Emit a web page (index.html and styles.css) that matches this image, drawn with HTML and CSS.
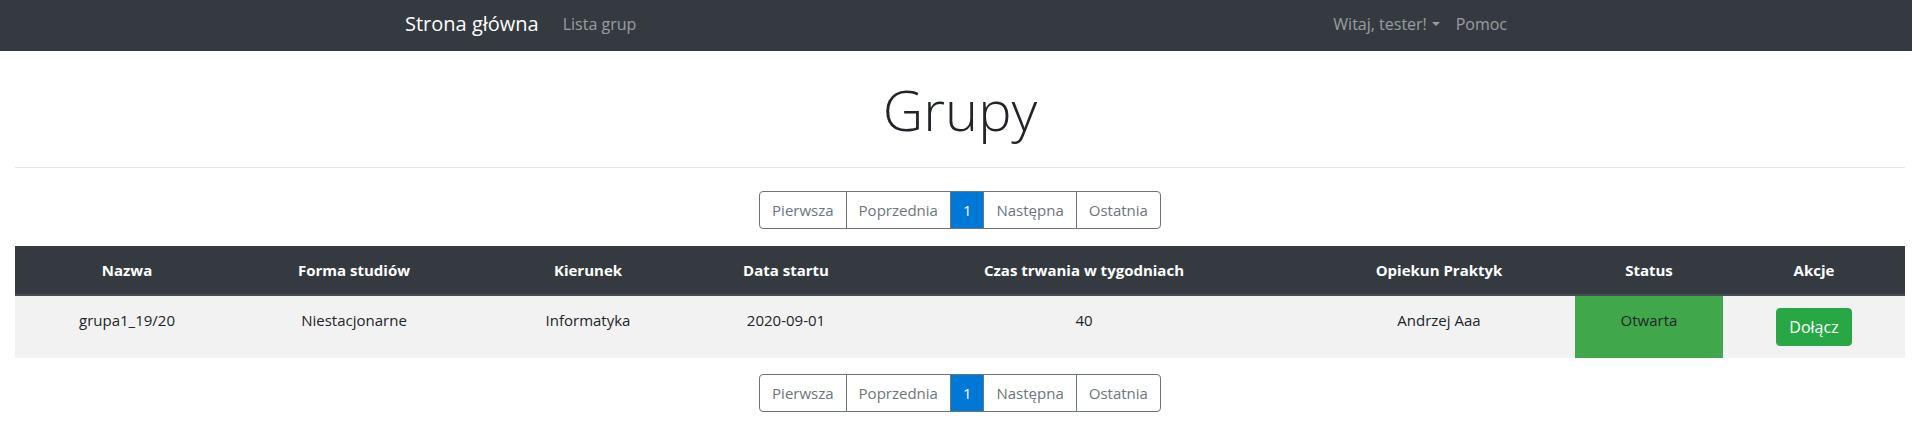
FILE: index.html
```html
<!DOCTYPE html>
<html lang="pl">
<head>
<meta charset="utf-8">
<title>Grupy</title>
<link rel="stylesheet" href="styles.css">
</head>
<body>
<nav class="navbar">
  <div class="container nav-inner">
    <a class="brand" href="#">Strona główna</a>
    <ul class="nav-list">
      <li><a class="nav-link" href="#">Lista grup</a></li>
    </ul>
    <ul class="nav-list nav-right">
      <li><a class="nav-link dropdown-toggle" href="#">Witaj, tester!</a></li>
      <li><a class="nav-link" href="#">Pomoc</a></li>
    </ul>
  </div>
</nav>
<main class="page">
  <h1 class="title">Grupy</h1>
  <hr class="divider">
  <ul class="pagination">
    <li class="page-item"><a class="page-link" href="#">Pierwsza</a></li>
    <li class="page-item"><a class="page-link" href="#">Poprzednia</a></li>
    <li class="page-item active"><a class="page-link" href="#">1</a></li>
    <li class="page-item"><a class="page-link" href="#">Następna</a></li>
    <li class="page-item"><a class="page-link" href="#">Ostatnia</a></li>
  </ul>
  <table class="groups">
    <thead>
      <tr>
        <th class="c1">Nazwa</th>
        <th class="c2">Forma studiów</th>
        <th class="c3">Kierunek</th>
        <th class="c4">Data startu</th>
        <th class="c5">Czas trwania w tygodniach</th>
        <th class="c6">Opiekun Praktyk</th>
        <th class="c7">Status</th>
        <th class="c8">Akcje</th>
      </tr>
    </thead>
    <tbody>
      <tr>
        <td>grupa1_19/20</td>
        <td>Niestacjonarne</td>
        <td>Informatyka</td>
        <td>2020-09-01</td>
        <td>40</td>
        <td>Andrzej Aaa</td>
        <td class="status-open">Otwarta</td>
        <td><button class="btn-join" type="button">Dołącz</button></td>
      </tr>
    </tbody>
  </table>
  <ul class="pagination">
    <li class="page-item"><a class="page-link" href="#">Pierwsza</a></li>
    <li class="page-item"><a class="page-link" href="#">Poprzednia</a></li>
    <li class="page-item active"><a class="page-link" href="#">1</a></li>
    <li class="page-item"><a class="page-link" href="#">Następna</a></li>
    <li class="page-item"><a class="page-link" href="#">Ostatnia</a></li>
  </ul>
</main>
</body>
</html>
```

FILE: styles.css
```css
*,
*::before,
*::after {
  box-sizing: border-box;
}
html {
  overflow: hidden;
}
body {
  margin: 0;
  width: 1920px;
  font-family: "Open Sans", "Noto Sans", sans-serif;
  font-size: 16px;
  line-height: 1.5;
  color: #212529;
  background: #fff;
}
a {
  text-decoration: none;
}
.navbar {
  background: #343a40;
  height: 51px;
}
.container {
  max-width: 1140px;
  margin: 0 auto;
  padding: 0 15px;
}
.nav-inner {
  display: flex;
  align-items: center;
  height: 48px;
}
.brand {
  color: #fff;
  font-size: 20px;
  line-height: 30px;
  margin-right: 16px;
  padding: 5px 0;
}
.nav-list {
  list-style: none;
  margin: 0;
  padding: 0;
  display: flex;
}
.nav-right {
  margin-left: auto;
}
.nav-link {
  display: block;
  padding: 8px;
  color: rgba(255, 255, 255, 0.5);
}
.dropdown-toggle::after {
  content: "";
  display: inline-block;
  margin-left: 0.3em;
  vertical-align: 0.255em;
  border-top: 0.3em solid;
  border-right: 0.3em solid transparent;
  border-left: 0.3em solid transparent;
}
.page {
  padding: 25px 15px 0;
}
.title {
  margin: 0;
  text-align: center;
  font-size: 56px;
  font-weight: 300;
  line-height: 1.2;
}
.divider {
  margin: 24px 0 0;
  border: 0;
  border-top: 1px solid rgba(0, 0, 0, 0.1);
}
.pagination {
  list-style: none;
  display: flex;
  justify-content: center;
  margin: 23px 0 17px;
  padding: 0;
}
.groups + .pagination {
  margin-top: 16px;
}
.page-link {
  display: block;
  padding: 8px 12px;
  font-size: 15px;
  line-height: 20px;
  color: #6c757d;
  border: 1px solid #6c757d;
  margin-left: -1px;
  background: #fff;
}
.page-item:first-child .page-link {
  margin-left: 0;
  border-radius: 4px 0 0 4px;
}
.page-item:last-child .page-link {
  border-radius: 0 4px 4px 0;
}
.page-item.active .page-link {
  background: #0078d7;
  border-color: #6c757d;
  color: #fff;
}
.groups {
  width: 1890px;
  border-collapse: collapse;
  table-layout: fixed;
  font-size: 15px;
}
.groups th,
.groups td {
  padding: 12px;
  line-height: 24px;
  text-align: center;
  vertical-align: top;
}
.groups th {
  background: #343a40;
  color: #fff;
  font-weight: 700;
  border-bottom: 2px solid #454d55;
}
.groups td {
  border-top: 1px solid #dee2e6;
  background: #f2f2f2;
}
.c1 { width: 224px; }
.c2 { width: 230px; }
.c3 { width: 238px; }
.c4 { width: 158px; }
.c5 { width: 438px; }
.c6 { width: 272px; }
.c7 { width: 148px; }
.c8 { width: 182px; }
.groups td.status-open {
  background: #40a84a;
}
.btn-join {
  font-family: inherit;
  font-size: 16px;
  line-height: 24px;
  padding: 6px 12px;
  color: #fff;
  background: #28a745;
  border: 1px solid #28a745;
  border-radius: 4px;
  cursor: pointer;
}
```
